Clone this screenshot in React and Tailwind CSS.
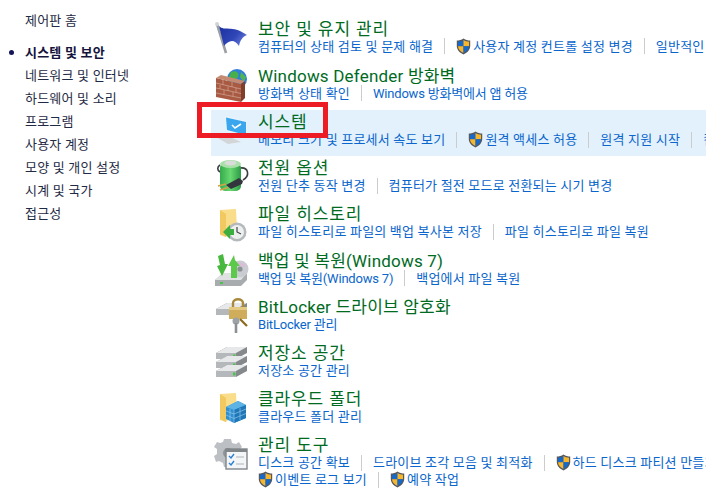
const navItems = ["네트워크 및 인터넷", "하드웨어 및 소리", "프로그램", "사용자 계정", "모양 및 개인 설정", "시계 및 국가", "접근성"];

const Shield = ({ className = "" }) => (
  <svg width="15" height="17" viewBox="0 0 15 17" className={`shrink-0 ${className}`}>
    <path d="M7.5 0.5 C5.5 2 3 2.6 0.8 2.6 L0.8 8 C0.8 12 4 15 7.5 16.5 C11 15 14.2 12 14.2 8 L14.2 2.6 C12 2.6 9.5 2 7.5 0.5 Z" fill="#56585c" />
    <path d="M7.5 2 C6 3 4 3.6 2 3.7 L2 8.3 L7.5 8.3 Z" fill="#1669c9" />
    <path d="M7.5 2 C9 3 11 3.6 13 3.7 L13 8.3 L7.5 8.3 Z" fill="#f6b62d" />
    <path d="M2 8.3 L7.5 8.3 L7.5 15 C4.5 13.7 2.2 11.4 2 8.3 Z" fill="#f6b62d" />
    <path d="M13 8.3 L7.5 8.3 L7.5 15 C10.5 13.7 12.8 11.4 13 8.3 Z" fill="#1669c9" />
  </svg>
);

const Sep = () => <span className="mx-[11px] h-[16px] w-px shrink-0 bg-[#cccccc]" />;

const Links = ({ items }) => (
  <div className="flex h-[17px] items-center whitespace-nowrap text-[13px] leading-[17px] tracking-[0.2px] text-[#0a66cc]">
    {items.map((item, i) => (
      <span key={item.text} className="flex items-center">
        {i > 0 && <Sep />}
        {item.shield && <Shield className="mr-[2px]" />}
        <span className={item.latin ? "tracking-[-0.2px]" : ""}>{item.text}</span>
      </span>
    ))}
  </div>
);

const Icon = ({ children }) => (
  <svg width="36" height="36" viewBox="0 0 36 36" className="mt-[3px] shrink-0 overflow-visible">
    {children}
  </svg>
);

const Drive = ({ y = 0, led = true }) => (
  <g transform={`translate(0 ${y})`}>
    <path d="M2 9 L13 3 L33 3 L33 9 L22 15 L2 15 Z" fill="#85898c" />
    <path d="M2 9 L13 3 L33 3 L22 9 Z" fill="#e6e8e9" />
    <path d="M2 9 L22 9 L22 15 L2 15 Z" fill="#b4b8ba" />
    {led && <rect x="19" y="10.5" width="2.5" height="3" fill="#4bc24b" />}
  </g>
);

const icons = {
  flag: (
    <Icon>
      <path d="M3 4 L12 33" stroke="#9a9fa4" strokeWidth="2.6" />
      <circle cx="3" cy="4" r="2" fill="#d2d5d7" />
      <path d="M5 6 C11 12 17 4 33 15 C28 17 26 21 25 26 C20 18 14 21 10 26 Z" fill="url(#flagBlue)" />
      <defs>
        <linearGradient id="flagBlue" x1="0" y1="0" x2="1" y2="0.6">
          <stop offset="0" stopColor="#1b2f9f" />
          <stop offset="0.65" stopColor="#3047b8" />
          <stop offset="1" stopColor="#6073d4" />
        </linearGradient>
      </defs>
    </Icon>
  ),
  wall: (
    <Icon>
      <circle cx="23" cy="12" r="10" fill="#2f7fd8" />
      <path d="M17 5 C22 3 26 6 24 10 C22 14 17 12 16 17 L14 12 Z" fill="#46b04a" />
      <path d="M27 5 L32 10 L30 15 L26 10 Z" fill="#52b552" />
      <path d="M2 11 L27 17 L27 35 L2 30 Z" fill="#a85a42" />
      <path d="M2 11 L7 8 L31 14 L27 17 Z" fill="#c58a74" />
      <path d="M27 17 L31 14 L31 31 L27 35 Z" fill="#7f3f2c" />
      <path d="M2 16 L27 22 M2 21 L27 26.5 M2 26 L27 31 M9 12.5 L9 18 M18 15 L18 20 M6 18 L6 22 M14 19.5 L14 24 M22 21 L22 25.5 M10 23 L10 27.5 M19 25 L19 29.5" stroke="#d3a898" strokeWidth="0.7" fill="none" />
    </Icon>
  ),
  monitor: (
    <Icon>
      <path d="M2 24 L14 23 L27 29 L14 31 Z" fill="#d2d6d9" />
      <path d="M11 3 L33 8 L33 23 L12 18 Z" fill="#e9f5fd" />
      <path d="M12 4.5 L32 9 L32 22 L13 17 Z" fill="#3aa6ee" />
      <path d="M18 12 L21 15 L27 11" stroke="#ffffff" strokeWidth="1.6" fill="none" />
    </Icon>
  ),
  power: (
    <Icon>
      <path d="M26 9 C35 8 36 17 29 21" stroke="#3a3d42" strokeWidth="1.6" fill="none" />
      <path d="M6 6 C3 8 3 11 6 13" stroke="#3a3d42" strokeWidth="1.6" fill="none" />
      <rect x="6" y="4" width="21" height="28" rx="5" fill="url(#batGreen)" />
      <ellipse cx="16.5" cy="5" rx="10.5" ry="4" fill="#a9dfa9" />
      <ellipse cx="16.5" cy="4" rx="6" ry="2.5" fill="#d9dcda" />
      <path d="M12 26 L25 19 L29 22 L28 25 L17 30 Z" fill="#33373d" />
      <path d="M4 27 L12 25 M6 31 L14 28.5" stroke="#d1a447" strokeWidth="1.8" />
      <defs>
        <linearGradient id="batGreen" x1="0" y1="0" x2="1" y2="0">
          <stop offset="0" stopColor="#35ab4c" />
          <stop offset="0.5" stopColor="#68d870" />
          <stop offset="1" stopColor="#2b9a45" />
        </linearGradient>
      </defs>
    </Icon>
  ),
  history: (
    <Icon>
      <path d="M6 5 L22 4 L23 24 L12 32 L6 30 Z" fill="#f9dd8b" />
      <path d="M6 5 L12 9 L12 32 L6 29 Z" fill="#f2c860" />
      <circle cx="23" cy="27" r="9.5" fill="#b5b9bb" />
      <circle cx="23" cy="27" r="7" fill="#eef0f0" />
      <path d="M23 22 L23 27 L27 29" stroke="#444" strokeWidth="1.2" fill="none" />
      <path d="M9 27 L16 20 L16 24 L20 24 L20 30 L16 30 L16 34 Z" fill="#3cae3f" />
    </Icon>
  ),
  backup: (
    <Icon>
      <path d="M1 28 L9 21 L33 21 L33 28 L27 34 L1 34 Z" fill="#a8acae" />
      <path d="M1 28 L9 21 L33 21 L27 28 Z" fill="#dfe1e2" />
      <rect x="6" y="30" width="3" height="2" fill="#4bc24b" />
      <circle cx="26" cy="17" r="8.5" fill="#c9ccd0" />
      <circle cx="26" cy="17" r="2.6" fill="#8d8f96" />
      <path d="M24 11 L31 14" stroke="#e0b8d8" strokeWidth="2" />
      <path d="M4 4 L9 2 L11 12 L14 12 L8 24 L3 14 L6 13 Z" fill="#49b83e" />
      <path d="M21 8 L26 14 L23 14 L23 26 L17 26 L17 14 L14 14 L20 3 Z" fill="#5cc94a" />
    </Icon>
  ),
  bitlocker: (
    <Icon>
      <Drive y={2} led={false} />
      <path d="M19 9 L19 5 C19 0 29 0 29 5 L29 9" stroke="#a98a3c" strokeWidth="2.4" fill="none" />
      <path d="M15 9 L33 9 L33 21 L15 21 Z" fill="#d0ad5a" />
      <path d="M15 9 L33 9 L33 12 L15 12 Z" fill="#e4c983" />
      <circle cx="22" cy="23" r="3.5" fill="#9da2a6" />
      <path d="M22 25 L22 35" stroke="#8c9094" strokeWidth="2.6" />
      <path d="M26 21 L33 28" stroke="#8a6a1c" strokeWidth="2.2" />
    </Icon>
  ),
  storage: (
    <Icon>
      <Drive y={0} />
      <Drive y={9} />
      <Drive y={18} />
    </Icon>
  ),
  cloud: (
    <Icon>
      <path d="M6 4 L22 3 L23 22 L12 32 L6 30 Z" fill="#f9dd8b" />
      <path d="M6 4 L12 8 L12 32 L6 29 Z" fill="#f2c860" />
      <path d="M12 17 L24 11 L32 15 L32 28 L20 33 L12 29 Z" fill="#2f8fd0" />
      <path d="M12 17 L24 11 L32 15 L20 20 Z" fill="#5cb3e4" />
      <path d="M20 20 L32 15 L32 28 L20 33 Z" fill="#1f77b8" />
      <path d="M12 21 L20 24 L32 19 M12 25 L20 28.5 L32 23.5 M16 19 L16 31 M20 20 L20 33 M26 18 L26 30" stroke="#9dd2f0" strokeWidth="0.6" fill="none" />
    </Icon>
  ),
  tools: (
    <Icon>
      <path d="M10 3 L17 3 L18 7 L22 8 L25 6 L28 11 L25 14 L25 18 L28 20 L25 26 L21 24 L17 27 L16 31 L10 31 L9 27 L5 25 L2 26 L0 20 L3 18 L3 13 L0 11 L3 6 L6 7 L9 6 Z" fill="#bcc0c4" />
      <circle cx="14" cy="17" r="5" fill="#8f9397" />
      <rect x="12" y="13" width="21" height="20" fill="#f3f5f7" stroke="#80858a" strokeWidth="1.4" />
      <rect x="12" y="13" width="21" height="3" fill="#80858a" />
      <path d="M15 20 L17 22 L20 18 M15 27 L17 29 L20 25" stroke="#2e7fd0" strokeWidth="1.4" fill="none" />
      <path d="M22 21 L30 21 M22 28 L30 28" stroke="#b1b5b8" strokeWidth="1.2" />
    </Icon>
  ),
};

const sections = [
  { icon: "flag", title: "보안 및 유지 관리", lines: [[{ text: "컴퓨터의 상태 검토 및 문제 해결" }, { text: "사용자 계정 컨트롤 설정 변경", shield: true }, { text: "일반적인 컴퓨터 문제 해결" }]] },
  { icon: "wall", title: "Windows Defender 방화벽", latin: true, lines: [[{ text: "방화벽 상태 확인" }, { text: "Windows 방화벽에서 앱 허용", latin: true }]] },
  { icon: "monitor", title: "시스템", active: true, lines: [[{ text: "메모리 크기 및 프로세서 속도 보기" }, { text: "원격 액세스 허용", shield: true }, { text: "원격 지원 시작" }, { text: "컴퓨터 이름 보기" }]] },
  { icon: "power", title: "전원 옵션", lines: [[{ text: "전원 단추 동작 변경" }, { text: "컴퓨터가 절전 모드로 전환되는 시기 변경" }]] },
  { icon: "history", title: "파일 히스토리", lines: [[{ text: "파일 히스토리로 파일의 백업 복사본 저장" }, { text: "파일 히스토리로 파일 복원" }]] },
  { icon: "backup", title: "백업 및 복원(Windows 7)", latin: true, lines: [[{ text: "백업 및 복원(Windows 7)", latin: true }, { text: "백업에서 파일 복원" }]] },
  { icon: "bitlocker", title: "BitLocker 드라이브 암호화", latin: true, lines: [[{ text: "BitLocker 관리", latin: true }]] },
  { icon: "storage", title: "저장소 공간", lines: [[{ text: "저장소 공간 관리" }]] },
  { icon: "cloud", title: "클라우드 폴더", lines: [[{ text: "클라우드 폴더 관리" }]] },
  {
    icon: "tools",
    title: "관리 도구",
    lines: [
      [{ text: "디스크 공간 확보" }, { text: "드라이브 조각 모음 및 최적화" }, { text: "하드 디스크 파티션 만들기", shield: true }],
      [{ text: "이벤트 로그 보기", shield: true }, { text: "예약 작업", shield: true }],
    ],
  },
];

export default function App() {
  return (
    <div className="relative flex h-[494px] w-[706px] overflow-hidden bg-white font-['Roboto','Noto_Sans_CJK_KR',sans-serif]">
      <nav className="w-[211px] shrink-0 pl-[25px] pt-[9px] text-[13px] leading-[23px] tracking-[0.2px] text-[#1f2a44]">
        <div className="mb-[9px] h-[23px]">제어판 홈</div>
        <div className="relative h-[23px] font-bold text-[#14143c]">
          <span className="absolute left-[-16px] top-[9px] h-[5px] w-[5px] rounded-full bg-[#14145a]" />
          시스템 및 보안
        </div>
        {navItems.map((item) => (
          <div key={item} className="h-[23px]">{item}</div>
        ))}
      </nav>

      <main className="min-w-0 flex-1 pt-[16.5px]">
        {sections.map((s, i) => (
          <section key={s.title} className={`flex pl-[3px] ${i === 0 ? "h-[47.4px]" : "h-[46.2px]"} ${s.active ? "bg-[#e3f1fc]" : ""}`}>
            {icons[s.icon]}
            <div className="ml-[8px] min-w-0 flex-1 overflow-x-clip">
              <h2 className={`h-[21px] whitespace-nowrap text-[17px] font-normal leading-[24px] text-[#006b1f] ${s.latin ? "tracking-[0.2px]" : "tracking-[0.9px]"}`}>{s.title}</h2>
              {s.lines.map((line) => (
                <Links key={line[0].text} items={line} />
              ))}
            </div>
          </section>
        ))}
      </main>

      {/* red annotation drawn on top of the capture */}
      <div className="pointer-events-none absolute left-[197px] top-[102px] h-[36px] w-[131px] border-[5px] border-[#ed1c24]" />
    </div>
  );
}
